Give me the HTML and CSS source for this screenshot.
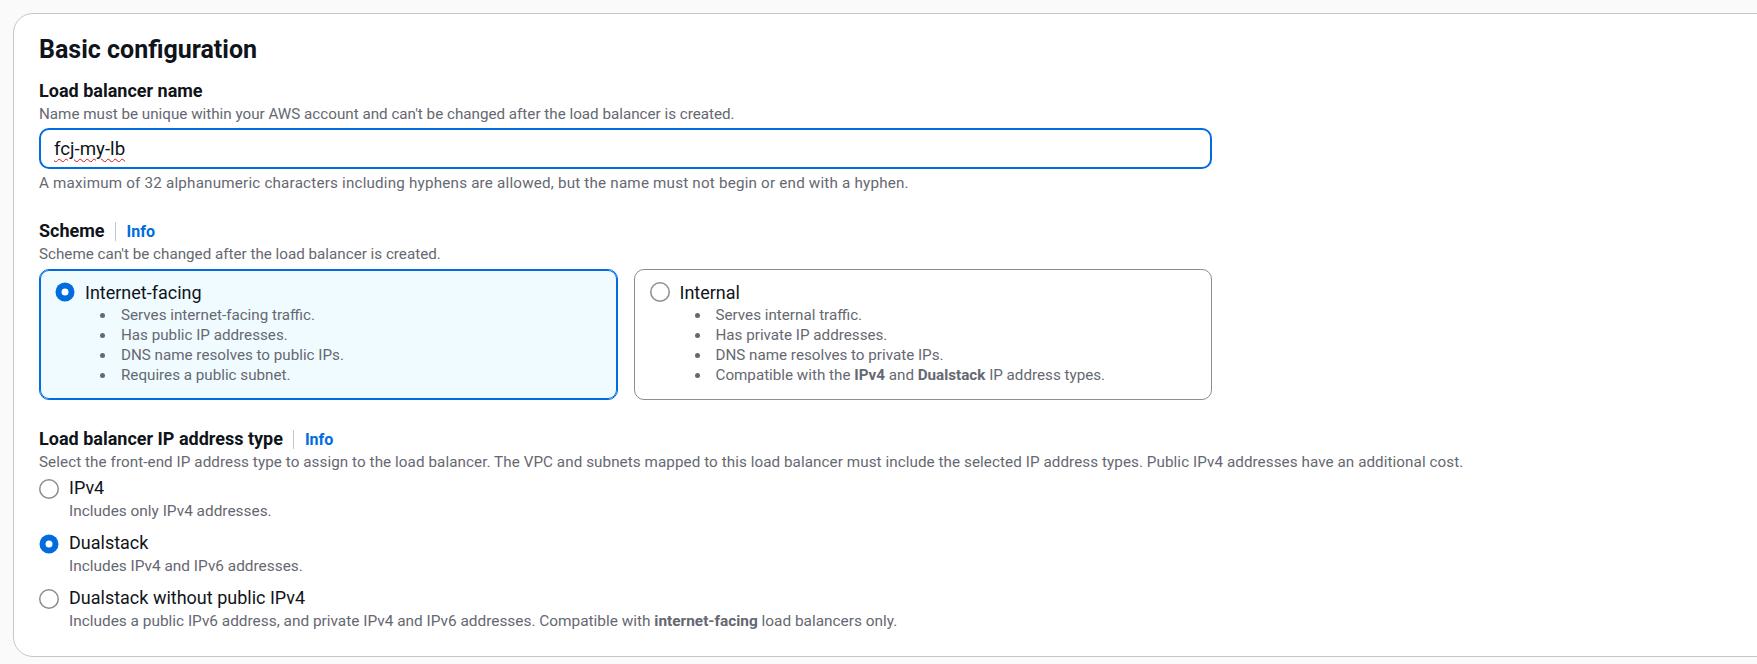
FILE: index.html
```html
<!DOCTYPE html>
<html lang="en">
<head>
<meta charset="utf-8">
<title>Basic configuration</title>
<link rel="stylesheet" href="styles.css">
</head>
<body>
<main class="page">
  <section class="card">
    <h2 class="card-title">Basic configuration</h2>

    <div class="field">
      <div class="field-label">Load balancer name</div>
      <div class="field-desc">Name must be unique within your AWS account and can't be changed after the load balancer is created.</div>
      <div class="input"><span class="misspelled">fcj-my-lb</span></div>
      <div class="field-hint">A maximum of 32 alphanumeric characters including hyphens are allowed, but the name must not begin or end with a hyphen.</div>
    </div>

    <div class="field field-scheme">
      <div class="field-head"><span class="field-label">Scheme</span><span class="sep"></span><a class="info">Info</a></div>
      <div class="field-desc">Scheme can't be changed after the load balancer is created.</div>
      <div class="tiles">
        <div class="tile tile-selected">
          <svg class="radio" viewBox="0 0 20 20"><circle cx="10" cy="10" r="9.5" fill="#006ce0"/><circle cx="10" cy="10" r="3.5" fill="#fff"/></svg>
          <div class="tile-body">
            <div class="opt-label">Internet-facing</div>
            <ul class="bullets">
              <li><span>Serves internet-facing traffic.</span></li>
              <li><span>Has public IP addresses.</span></li>
              <li><span>DNS name resolves to public IPs.</span></li>
              <li><span>Requires a public subnet.</span></li>
            </ul>
          </div>
        </div>
        <div class="tile">
          <svg class="radio" viewBox="0 0 20 20"><circle cx="10" cy="10" r="9.25" fill="#fff" stroke="#8c8c94" stroke-width="1.5"/></svg>
          <div class="tile-body">
            <div class="opt-label">Internal</div>
            <ul class="bullets">
              <li><span>Serves internal traffic.</span></li>
              <li><span>Has private IP addresses.</span></li>
              <li><span>DNS name resolves to private IPs.</span></li>
              <li><span>Compatible with the <b>IPv4</b> and <b>Dualstack</b> IP address types.</span></li>
            </ul>
          </div>
        </div>
      </div>
    </div>

    <div class="field field-ip">
      <div class="field-head"><span class="field-label">Load balancer IP address type</span><span class="sep"></span><a class="info">Info</a></div>
      <div class="field-desc field-desc-wide">Select the front-end IP address type to assign to the load balancer. The VPC and subnets mapped to this load balancer must include the selected IP address types. Public IPv4 addresses have an additional cost.</div>
      <div class="options">
        <div class="option">
          <svg class="radio" viewBox="0 0 20 20"><circle cx="10" cy="10" r="9.25" fill="#fff" stroke="#8c8c94" stroke-width="1.5"/></svg>
          <div>
            <div class="opt-label">IPv4</div>
            <div class="opt-sub">Includes only IPv4 addresses.</div>
          </div>
        </div>
        <div class="option">
          <svg class="radio" viewBox="0 0 20 20"><circle cx="10" cy="10" r="9.5" fill="#006ce0"/><circle cx="10" cy="10" r="3.5" fill="#fff"/></svg>
          <div>
            <div class="opt-label">Dualstack</div>
            <div class="opt-sub">Includes IPv4 and IPv6 addresses.</div>
          </div>
        </div>
        <div class="option">
          <svg class="radio" viewBox="0 0 20 20"><circle cx="10" cy="10" r="9.25" fill="#fff" stroke="#8c8c94" stroke-width="1.5"/></svg>
          <div>
            <div class="opt-label">Dualstack without public IPv4</div>
            <div class="opt-sub">Includes a public IPv6 address, and private IPv4 and IPv6 addresses. Compatible with <b>internet-facing</b> load balancers only.</div>
          </div>
        </div>
      </div>
    </div>
  </section>
</main>
</body>
</html>
```

FILE: styles.css
```css
* {
  box-sizing: border-box;
  margin: 0;
  padding: 0;
}

html,
body {
  height: 100%;
  overflow: hidden;
}

body {
  background: #fafafa;
  font-family: Roboto, "Open Sans", sans-serif;
  color: #0f141a;
}

.page {
  padding: 13px 0 0 13px;
}

.card {
  background: #fff;
  border: 1px solid #c6c6cd;
  border-radius: 20px;
  margin-right: -60px;
  padding: 21px 24px 25px 25px;
}

.card-title {
  font-size: 25px;
  line-height: 29px;
  font-weight: 700;
  margin-bottom: 16px;
}

.field-label {
  font-size: 18px;
  line-height: 22px;
  font-weight: 700;
}

.field-desc,
.field-hint {
  font-size: 15.2px;
  line-height: 20px;
  color: #656871;
  margin-top: 2px;
}

.field-desc-wide {
  letter-spacing: 0.08px;
}

.field-hint {
  margin-top: 4px;
  letter-spacing: 0.2px;
}

.input {
  max-width: 1173px;
  margin-top: 4px;
  height: 41px;
  border: 2px solid #006ce0;
  border-radius: 10px;
  padding: 0 13px;
  display: flex;
  align-items: center;
  font-size: 18.7px;
}

.misspelled {
  text-decoration: underline wavy #d91515;
  text-decoration-thickness: 1px;
  text-underline-offset: 3px;
}

.field-scheme {
  margin-top: 27px;
}

.field-ip {
  margin-top: 28px;
}

.field-head {
  display: flex;
  align-items: baseline;
  height: 22px;
}

.sep {
  align-self: center;
  width: 1px;
  height: 19px;
  background: #c6c6cd;
  margin: 0 11px 0 10px;
}

.info {
  font-size: 16px;
  font-weight: 700;
  color: #006ce0;
}

.tiles {
  max-width: 1173px;
  display: grid;
  grid-template-columns: 1fr 1fr;
  gap: 16px;
  margin-top: 5px;
}

.tile {
  border: 1px solid #8c8c94;
  border-radius: 10px;
  padding: 12px 15px 14px;
  display: flex;
  gap: 10px;
}

.tile-selected {
  border-color: #006ce0;
  box-shadow: inset 0 0 0 1px #006ce0;
  background: #f0fbff;
}

.radio {
  width: 20px;
  height: 20px;
  flex: none;
}

.opt-label {
  font-size: 18px;
  line-height: 22px;
}

.bullets {
  list-style: none;
  margin-top: 1px;
  font-size: 15.2px;
  line-height: 20px;
  color: #656871;
}

.bullets li {
  display: flex;
  align-items: center;
}

.bullets li::before {
  content: "";
  flex: none;
  width: 5px;
  height: 5px;
  border-radius: 50%;
  background: #656871;
  margin: 0 16px 0 15px;
}

.bullets b,
.opt-sub b {
  font-weight: 700;
}

.options {
  margin-top: 5px;
  display: flex;
  flex-direction: column;
  gap: 11px;
}

.option {
  display: flex;
  gap: 10px;
}

.option .radio {
  margin-top: 2px;
}

.opt-sub {
  font-size: 15.4px;
  line-height: 20px;
  color: #656871;
  margin-top: 2px;
}
```
